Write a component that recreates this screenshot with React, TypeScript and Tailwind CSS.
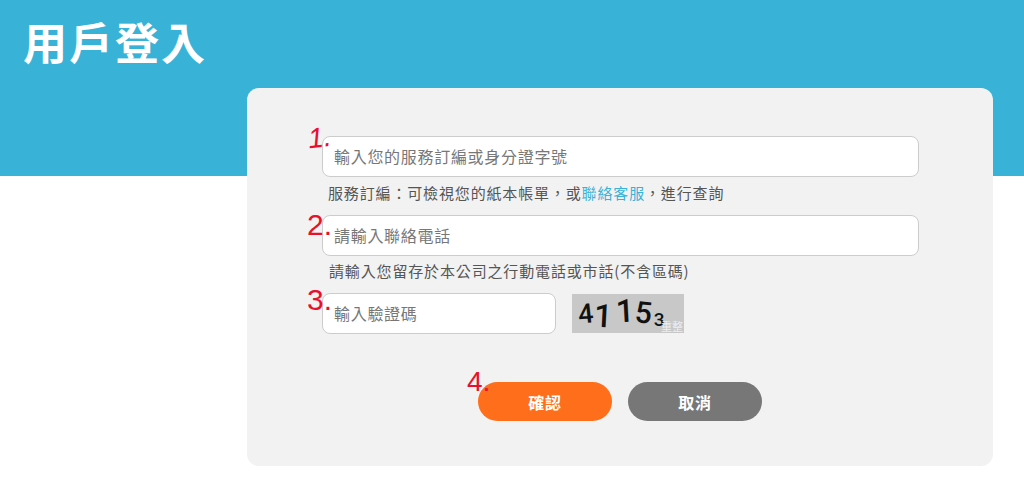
const cjk = "font-['Noto_Sans_CJK_TC','Noto_Sans',sans-serif]"
const field = 'block h-[41px] rounded-lg border border-[#cccccc] bg-white px-[11px] pb-px text-base tracking-[0.7px] outline-none placeholder:text-[#777777]'
const hint = 'text-[15px] leading-5 tracking-[0.85px] text-[#555555]'

function Mark({ n, className }: { n: string; className: string }) {
  return (
    <span className={`absolute font-['Liberation_Sans',sans-serif] leading-none text-[#e8112d] ${className}`}>
      {n}
    </span>
  )
}

function Captcha() {
  return (
    <div className="relative ml-4 mt-px flex h-[39px] w-[112px] items-center bg-[#c8c8c8] pl-[6px] font-['Roboto',sans-serif] font-medium text-[#111111]">
      <span className="mt-[2px] -rotate-6 text-[27px] leading-none">4</span>
      <span className="ml-px mt-[4px] rotate-3 text-[32px] leading-none">1</span>
      <span className="ml-[3px] -mt-[6px] -rotate-3 text-[32px] leading-none">1</span>
      <span className="ml-px -mt-[2px] rotate-6 text-[30px] leading-none">5</span>
      <span className="ml-[2px] mt-[11px] text-[19px] leading-none">3</span>
      <span className={`absolute bottom-0 right-[1px] text-[11px] font-normal leading-[14px] text-[#eeeeee] ${cjk}`}>重整</span>
    </div>
  )
}

export default function App() {
  return (
    <div className={`h-[496px] w-[1024px] overflow-hidden bg-white ${cjk}`}>
      <header className="h-[176px] bg-[#38b3d7] pl-[23px] pt-[11px]">
        <h1 className="text-[44px] font-bold leading-[60px] tracking-[2px] text-white">用戶登入</h1>
      </header>

      <main className="relative ml-[247px] -mt-[88px] h-[378px] w-[746px] rounded-xl bg-[#f2f2f2] pl-[75px] pt-[48px]">
        <Mark n="1." className="left-[61px] top-[36px] -rotate-6 text-[28px] italic" />
        <input placeholder="輸入您的服務訂編或身分證字號" className={`${field} w-[597px]`} />
        <p className={`ml-[6px] mt-[6px] ${hint}`}>
          服務訂編：可檢視您的紙本帳單，或<span className="text-[#38b3d7]">聯絡客服</span>，進行查詢
        </p>

        <Mark n="2." className="left-[60px] top-[122px] text-[30px]" />
        <input placeholder="請輸入聯絡電話" className={`${field} mt-[12px] w-[597px]`} />
        <p className={`ml-[7px] mt-[5px] ${hint}`}>
          請輸入您留存於本公司之行動電話或市話(不含區碼)
        </p>

        <Mark n="3." className="left-[60px] top-[197px] text-[30px]" />
        <div className="mt-[12px] flex">
          <input placeholder="輸入驗證碼" className={`${field} w-[234px]`} />
          <Captcha />
        </div>

        <Mark n="4." className="left-[220px] top-[280px] text-[28px]" />
        <div className="-ml-[75px] mt-[48px] flex justify-center gap-4">
          <button className="h-[39px] w-[134px] rounded-full bg-[#ff6e1b] text-base font-bold tracking-[0.7px] text-white">
            確認
          </button>
          <button className="h-[39px] w-[134px] rounded-full bg-[#777777] text-base font-bold tracking-[0.7px] text-white">
            取消
          </button>
        </div>
      </main>
    </div>
  )
}
